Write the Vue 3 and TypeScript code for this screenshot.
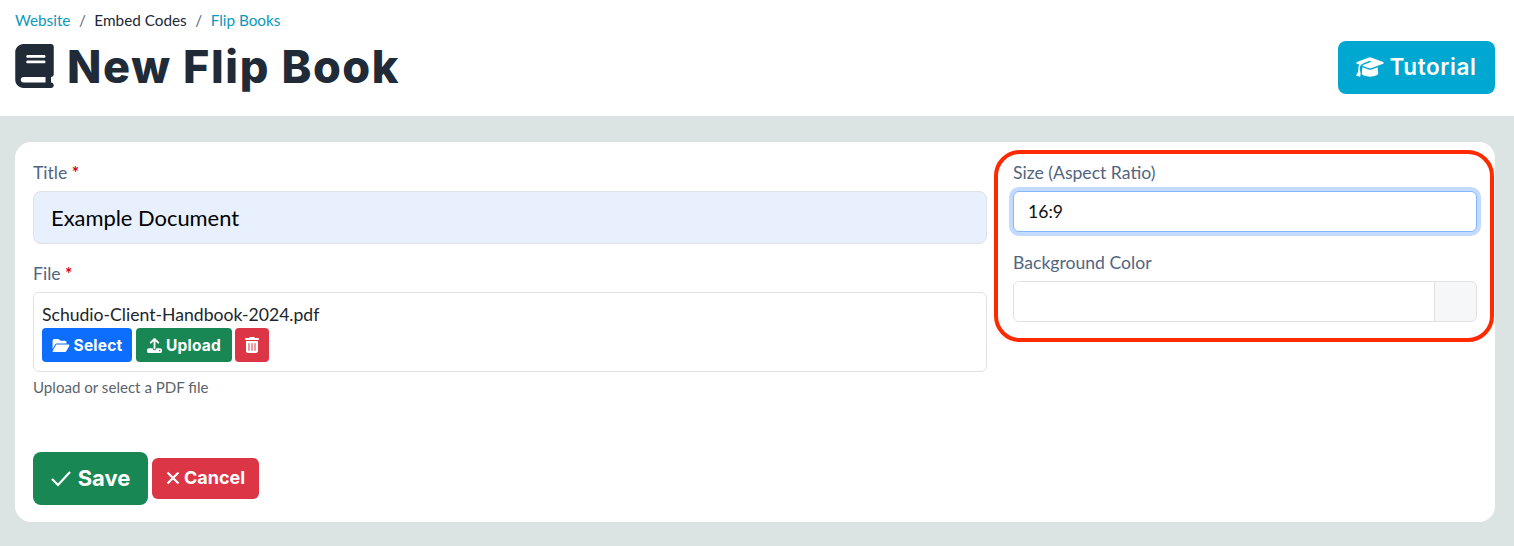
<template>
  <div class="page">
    <header class="page-header">
      <nav class="crumbs">
        <a>Website</a><span class="sep">/</span><span>Embed Codes</span><span class="sep">/</span><a>Flip Books</a>
      </nav>
      <div class="title-row">
        <h1>
          <svg class="h1-icon" viewBox="0 0 448 512"><path :d="icons.book" /></svg>
          New Flip Book
        </h1>
        <button class="btn btn-tutorial" type="button">
          <svg viewBox="0 0 640 512"><path :d="icons.cap" /></svg>
          Tutorial
        </button>
      </div>
    </header>

    <main class="content">
      <form class="card" @submit.prevent>
        <div class="col-main">
          <div class="field">
            <label>Title <span class="req">*</span></label>
            <input v-model="title" class="input input-lg" type="text" />
          </div>
          <div class="field file-field">
            <label>File <span class="req">*</span></label>
            <div class="file-box">
              <div class="file-name">{{ fileName }}</div>
              <div class="file-actions">
                <button class="btn btn-sm btn-blue" type="button">
                  <svg viewBox="0 0 576 512"><path :d="icons.folder" /></svg>
                  Select
                </button>
                <button class="btn btn-sm btn-green" type="button">
                  <svg viewBox="0 0 512 512"><path :d="icons.upload" /></svg>
                  Upload
                </button>
                <button class="btn btn-sm btn-red btn-icon" type="button" aria-label="Remove">
                  <svg viewBox="0 0 448 512"><path :d="icons.trash" /></svg>
                </button>
              </div>
            </div>
            <div class="help">Upload or select a PDF file</div>
          </div>
          <div class="actions">
            <button class="btn btn-save" type="submit">
              <svg class="line" viewBox="0 0 20 20"><path d="M1 11l6 6L19 4" /></svg>
              Save
            </button>
            <button class="btn btn-cancel" type="button">
              <svg class="line" viewBox="0 0 14 14"><path d="M1.5 1.5l11 11M12.5 1.5l-11 11" /></svg>
              Cancel
            </button>
          </div>
        </div>

        <div class="col-side">
          <div class="field">
            <label>Size (Aspect Ratio)</label>
            <input v-model="size" class="input input-focus" type="text" />
          </div>
          <div class="field">
            <label>Background Color</label>
            <div class="color-group">
              <input v-model="color" class="input color-input" type="text" />
              <span class="color-addon"></span>
            </div>
          </div>
        </div>

        <div class="highlight"></div>
      </form>
    </main>
  </div>
</template>

<script setup lang="ts">
import { ref } from 'vue'

const title = ref('Example Document')
const size = ref('16:9')
const color = ref('')
const fileName = 'Schudio-Client-Handbook-2024.pdf'

const icons = {
  book: 'M96 0C43 0 0 43 0 96V416c0 53 43 96 96 96H384h32c17.7 0 32-14.3 32-32s-14.3-32-32-32V384c17.7 0 32-14.3 32-32V32c0-17.7-14.3-32-32-32H384 96zm0 384H352v64H96c-17.7 0-32-14.3-32-32s14.3-32 32-32zm32-240c0-8.8 7.2-16 16-16H336c8.8 0 16 7.2 16 16s-7.2 16-16 16H144c-8.8 0-16-7.2-16-16zm16 48H336c8.8 0 16 7.2 16 16s-7.2 16-16 16H144c-8.8 0-16-7.2-16-16s7.2-16 16-16z',
  cap: 'M320 32c-8.1 0-16.1 1.4-23.7 4.1L15.8 137.4C6.3 140.9 0 149.9 0 160s6.3 19.1 15.8 22.6l57.9 20.9C57.3 229.3 48 259.8 48 291.9v28.1c0 28.4-10.8 57.7-22.3 80.8c-6.5 13-13.9 25.8-22.5 37.6C0 442.7-.9 448.3 .9 453.4s6 8.9 11.2 10.2l64 16c4.2 1.1 8.7 .3 12.4-2s6.3-6.1 7.1-10.4c8.6-42.8 4.3-81.2-2.1-108.7C90.3 344.3 86 329.8 80 316.5V291.9c0-30.2 10.2-58.7 27.9-81.5c12.9-15.5 29.6-28 49.2-35.7l157-61.7c8.2-3.2 17.5 .8 20.7 9s-.8 17.5-9 20.7l-157 61.7c-12.4 4.9-23.3 12.4-32.2 21.6l159.6 57.6c7.6 2.7 15.6 4.1 23.7 4.1s16.1-1.4 23.7-4.1L624.2 182.6c9.5-3.4 15.8-12.5 15.8-22.6s-6.3-19.1-15.8-22.6L343.7 36.1C336.1 33.4 328.1 32 320 32zM128 408c0 35.3 86 72 192 72s192-36.7 192-72L496.7 262.6 354.5 314c-11.1 4-22.8 6-34.5 6s-23.5-2-34.5-6L143.3 262.6 128 408z',
  folder: 'M88.7 223.8L0 375.8V96C0 60.7 28.7 32 64 32H181.5c17 0 33.3 6.7 45.3 18.7l26.5 26.5c12 12 28.3 18.7 45.3 18.7H416c35.3 0 64 28.7 64 64v32H144c-22.8 0-43.8 12.1-55.3 31.8zm27.6 16.1C122.1 230 132.6 224 144 224H544c11.5 0 22 6.1 27.7 16.1s5.7 22.2-.1 32.1l-112 192C453.9 474 443.4 480 432 480H32c-11.5 0-22-6.1-27.7-16.1s-5.7-22.2 .1-32.1l112-192z',
  upload: 'M288 109.3V352c0 17.7-14.3 32-32 32s-32-14.3-32-32V109.3l-73.4 73.4c-12.5 12.5-32.8 12.5-45.3 0s-12.5-32.8 0-45.3l128-128c12.5-12.5 32.8-12.5 45.3 0l128 128c12.5 12.5 12.5 32.8 0 45.3s-32.8 12.5-45.3 0L288 109.3zM64 352H192c0 35.3 28.7 64 64 64s64-28.7 64-64H448c35.3 0 64 28.7 64 64v32c0 35.3-28.7 64-64 64H64c-35.3 0-64-28.7-64-64V416c0-35.3 28.7-64 64-64zM432 456a24 24 0 1 0 0-48 24 24 0 1 0 0 48z',
  trash: 'M135.2 17.7C140.6 6.8 151.7 0 163.8 0H284.2c12.1 0 23.2 6.8 28.6 17.7L320 32h96c17.7 0 32 14.3 32 32s-14.3 32-32 32H32C14.3 96 0 81.7 0 64S14.3 32 32 32h96l7.2-14.3zM32 128H416V448c0 35.3-28.7 64-64 64H96c-35.3 0-64-28.7-64-64V128zm96 64c-8.8 0-16 7.2-16 16V432c0 8.8 7.2 16 16 16s16-7.2 16-16V208c0-8.8-7.2-16-16-16zm96 0c-8.8 0-16 7.2-16 16V432c0 8.8 7.2 16 16 16s16-7.2 16-16V208c0-8.8-7.2-16-16-16zm96 0c-8.8 0-16 7.2-16 16V432c0 8.8 7.2 16 16 16s16-7.2 16-16V208c0-8.8-7.2-16-16-16z'
}
</script>

<style>
html, body {
  background: #dce3e3;
}
</style>

<style scoped>
.page {
  height: 546px;
  overflow: hidden;
  font-family: Lato, "Liberation Sans", sans-serif;
  color: #212529;
  background: #dce3e3;
}

.page-header {
  height: 116px;
  box-sizing: border-box;
  padding: 11px 19px 0 15px;
  background: #fff;
}

.crumbs {
  display: flex;
  height: 19px;
  font-size: 15.3px;
  line-height: 19px;
  color: #212837;
}

.crumbs a {
  color: #0d98ba;
}

.sep {
  margin: 0 8.5px;
  color: #5f6670;
}

.title-row {
  display: flex;
  justify-content: space-between;
  align-items: flex-start;
  margin-top: 11px;
}

h1 {
  display: flex;
  align-items: center;
  gap: 13px;
  margin: 0;
  height: 53px;
  box-sizing: border-box;
  padding-bottom: 2px;
  font-family: Inter, sans-serif;
  font-size: 45px;
  font-weight: 800;
  letter-spacing: 1.6px;
  color: #212b38;
}

.h1-icon {
  width: 39px;
  height: 44px;
  margin-top: -1px;
  fill: #212b38;
}

.btn {
  display: inline-flex;
  align-items: center;
  justify-content: center;
  padding: 0 0 2px;
  border: 0;
  color: #fff;
  font-family: Inter, sans-serif;
  font-weight: 700;
  cursor: pointer;
}

.btn svg {
  fill: #fff;
}

.btn svg.line {
  fill: none;
  stroke: #fff;
  stroke-width: 2.2;
}

.btn-tutorial {
  width: 157px;
  height: 53px;
  gap: 5px;
  border-radius: 8px;
  background: #00a7d0;
  font-size: 22.5px;
  font-weight: 600;
  letter-spacing: 0.6px;
}

.btn-tutorial svg {
  width: 28px;
  height: 22px;
}

.content {
  padding: 26px 19px 0 15px;
}

.card {
  position: relative;
  display: flex;
  gap: 26px;
  height: 380px;
  box-sizing: border-box;
  padding: 18px 18px 17px;
  border-radius: 16px;
  background: #fff;
}

.col-main {
  display: flex;
  flex-direction: column;
  width: 954px;
}

.col-side {
  flex: 1;
}

.field {
  margin-bottom: 17px;
}

.col-side .field {
  margin-bottom: 18px;
}

label {
  display: block;
  height: 31px;
  box-sizing: border-box;
  padding-top: 1px;
  font-size: 17.6px;
  line-height: 24px;
  color: #51657f;
}

.req {
  color: #d0021b;
  font-weight: 700;
}

.input {
  display: block;
  width: 100%;
  height: 41px;
  box-sizing: border-box;
  padding: 0 14px;
  border: 1px solid #dee2e6;
  border-radius: 6px;
  outline: 0;
  font-family: Lato, sans-serif;
  font-size: 17.6px;
  color: #111;
  background: #fff;
}

.input-lg {
  height: 53px;
  padding: 0 17px;
  border-radius: 8px;
  font-size: 21.9px;
  color: #000;
  background: #e8f0fe;
}

.input-focus {
  border-color: #86b7fe;
  box-shadow: 0 0 0 4px #c2dbfe;
}

.file-field {
  margin-bottom: 0;
}

.file-box {
  height: 80px;
  box-sizing: border-box;
  padding: 9px 8px 0;
  border: 1px solid #dee2e6;
  border-radius: 6px;
}

.file-name {
  height: 26px;
  font-size: 17.6px;
  line-height: 26px;
  color: #212529;
}

.file-actions {
  display: flex;
  gap: 4px;
}

.btn-sm {
  height: 34px;
  padding: 0;
  gap: 4px;
  border-radius: 4px;
  font-size: 15.5px;
  letter-spacing: 0.2px;
}

.btn-sm svg {
  height: 15px;
}

.btn-blue {
  width: 90px;
  background: #0d6efd;
}

.btn-blue svg {
  width: 18px;
}

.btn-green {
  width: 96px;
  background: #198754;
}

.btn-green svg {
  width: 15px;
}

.btn-red {
  background: #dc3545;
}

.btn-icon {
  width: 34px;
  margin-left: -1px;
}

.btn-icon svg {
  width: 14px;
  height: 16px;
}

.help {
  margin-top: 6px;
  font-size: 15.1px;
  line-height: 19px;
  color: #5c636a;
}

.actions {
  display: flex;
  align-items: center;
  gap: 4px;
  margin-top: auto;
}

.btn-save {
  width: 115px;
  height: 53px;
  gap: 7px;
  border-radius: 8px;
  background: #198754;
  font-size: 22px;
}

.btn-save svg {
  width: 20px;
  height: 20px;
}

.btn-cancel {
  width: 107px;
  height: 41px;
  gap: 4px;
  border-radius: 6px;
  background: #dc3545;
  font-size: 18px;
}

.btn-cancel svg {
  width: 14px;
  height: 14px;
}

.color-group {
  display: flex;
}

.color-input {
  flex: 1;
  border-radius: 6px 0 0 6px;
}

.color-addon {
  width: 43px;
  height: 41px;
  box-sizing: border-box;
  margin-left: -1px;
  border: 1px solid #dee2e6;
  border-radius: 0 6px 6px 0;
  background: #f6f7f9;
}

.highlight {
  position: absolute;
  left: 979px;
  top: 8px;
  width: 500px;
  height: 192px;
  box-sizing: border-box;
  border: 4px solid #ff2a00;
  border-radius: 26px;
  pointer-events: none;
}
</style>
